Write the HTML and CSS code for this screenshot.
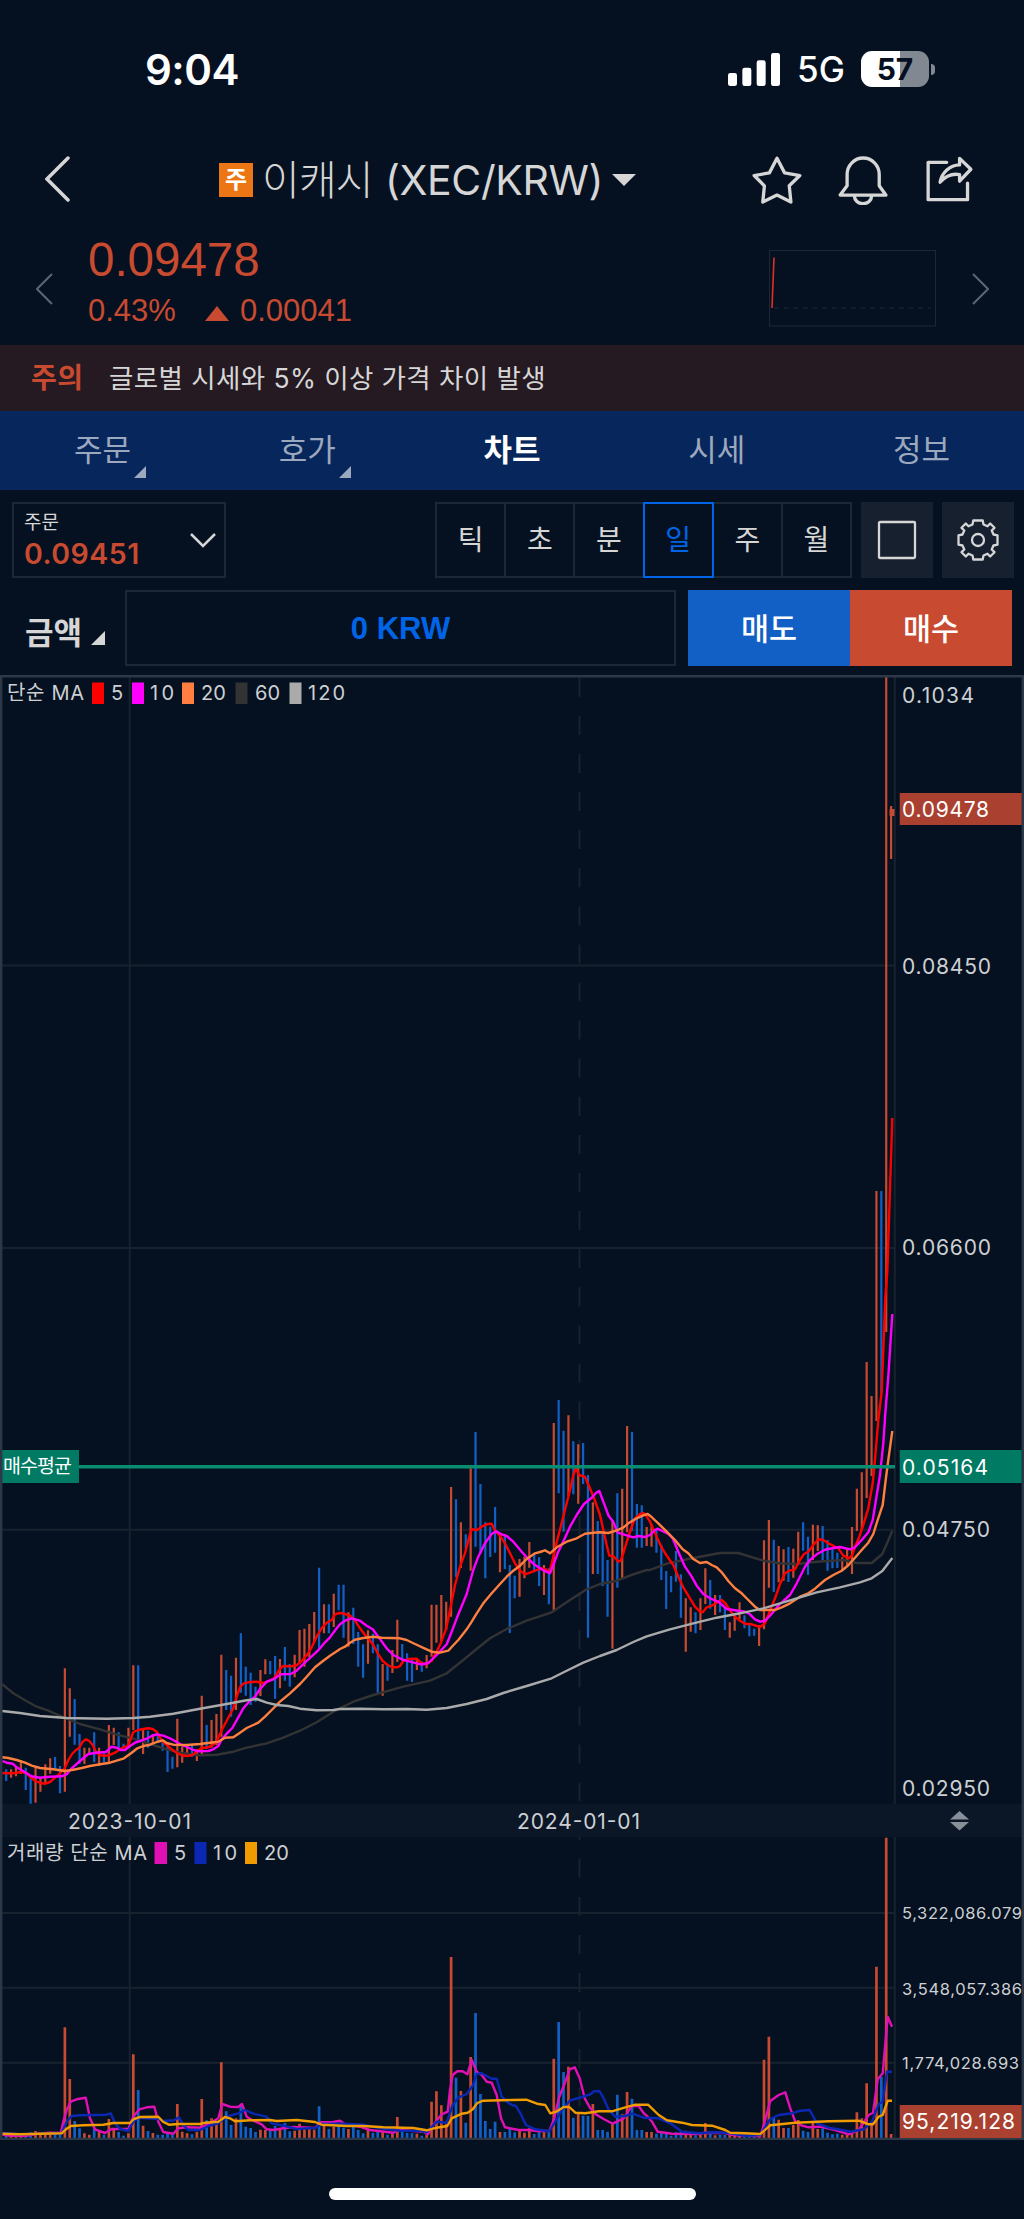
FILE: index.html
```html
<!DOCTYPE html>
<html lang="ko">
<head>
    <meta charset="UTF-8">
    <meta name="viewport" content="width=device-width, initial-scale=1.0">
    <title>이캐시 (XEC/KRW)</title>
    <link rel="stylesheet" href="styles.css">
</head>
<body>
    <div class="status-bar">
        <div class="clock">9:04</div>
        <div class="status-right">
            <svg class="signal" viewBox="0 0 156 99">
                <rect x="0" y="60" width="27" height="39" rx="7"/>
                <rect x="43" y="44" width="27" height="55" rx="7"/>
                <rect x="86" y="22" width="27" height="77" rx="7"/>
                <rect x="129" y="0" width="27" height="99" rx="7"/>
            </svg>
            <span class="network">5G</span>
            <div class="battery"><span>57</span></div>
            <div class="battery-nub"></div>
        </div>
    </div>

    <header class="top-bar">
        <svg class="back" viewBox="0 0 26 46"><path d="M23 2 L2 23 L23 44"/></svg>
        <div class="pair">
            <span class="badge">주</span>
            <h1><span class="pair-name">이캐시</span><span class="pair-code">(XEC/KRW)</span></h1>
            <i class="caret"></i>
        </div>
        <div class="actions">
            <svg class="icon" viewBox="154 376 150 148"><path d="M229 383 L252 427 L298 435 L266 466 L271 515 L229 494 L186 515 L191 466 L160 435 L206 427 Z"/></svg>
            <svg class="icon" viewBox="411 376 150 148"><path d="M438 466 V432 A48.5 50 0 0 1 535 432 V466 L555 494 H417 L438 466 Z"/><path d="M460 497 A26 23 0 0 0 512 497"/></svg>
            <svg class="icon" viewBox="668 376 150 148"><path d="M736 395 H680 V508 H799 V458"/><path d="M775 383 L809 416 L775 452 V432 C752 428 732 437 716 455 C722 425 745 404 775 403 Z"/></svg>
        </div>
    </header>

    <section class="quote">
        <svg class="arrow" viewBox="0 0 17 32"><path d="M16 1 L1 16 L16 31"/></svg>
        <div class="quote-price">
            <div class="price">0.09478</div>
            <div class="change"><span>0.43%</span><i class="up"></i><span>0.00041</span></div>
        </div>
        <svg class="mini-chart" viewBox="0 0 167 77">
            <rect x="0.5" y="0.5" width="166" height="75.5"/>
            <path class="mini-base" d="M5 58 H162"/>
            <path class="mini-line" d="M3 58 L5 7.500"/>
        </svg>
        <svg class="arrow" viewBox="0 0 17 32"><path d="M1 1 L16 16 L1 31"/></svg>
    </section>

    <div class="notice">
        <strong>주의</strong>
        <span>글로벌 시세와 5% 이상 가격 차이 발생</span>
    </div>

    <nav class="tabs">
        <a class="tab more">주문</a>
        <a class="tab more">호가</a>
        <a class="tab active">차트</a>
        <a class="tab">시세</a>
        <a class="tab">정보</a>
    </nav>

    <div class="toolbar">
        <div class="order-select">
            <div>
                <div class="order-label">주문</div>
                <div class="order-price">0.09451</div>
            </div>
            <svg viewBox="0 0 26 15"><path d="M1 1 L13 13 L25 1"/></svg>
        </div>
        <div class="periods">
            <div class="period">틱</div>
            <div class="period">초</div>
            <div class="period">분</div>
            <div class="period active">일</div>
            <div class="period">주</div>
            <div class="period">월</div>
        </div>
        <button class="tool"><svg viewBox="0 0 42 42"><rect x="3" y="3" width="36" height="36" rx="1"/></svg></button>
        <button class="tool"><svg viewBox="-21 -21 42 42"><circle r="6"/><path d="M-4.700 -19.500 H4.700 L5.500 -15.500 L9.500 -13.700 L12.200 -16.500 L16.500 -12.200 L13.700 -9.500 L15.500 -5.500 L19.500 -4.700 V4.700 L15.500 5.500 L13.700 9.500 L16.500 12.200 L12.200 16.500 L9.500 13.700 L5.500 15.500 L4.700 19.500 H-4.700 L-5.500 15.500 L-9.500 13.700 L-12.200 16.500 L-16.500 12.200 L-13.700 9.500 L-15.500 5.500 L-19.500 4.700 V-4.700 L-15.500 -5.500 L-13.700 -9.500 L-16.500 -12.200 L-12.200 -16.500 L-9.500 -13.700 L-5.500 -15.500 Z"/></svg></button>
    </div>

    <div class="order-row">
        <div class="amount-label">금액<i></i></div>
        <div class="amount">0 KRW</div>
        <button class="sell">매도</button>
        <button class="buy">매수</button>
    </div>

    <svg class="chart" viewBox="0 675 1024 1465">
        <g class="grid">
            <path d="M2 965.500 H894 M2 1248 H894 M2 1529.800 H894"/>
            <path d="M2 1913 H894 M2 1987.700 H894 M2 2062.800 H894"/>
            <path d="M129.700 677 V2138 M894.800 677 V2138"/>
            <path class="dashed" d="M579.500 677.700 V2138"/>
        </g>
        <rect class="date-band" x="2" y="1804" width="1020" height="33"/>

        <g id="price"></g>
        <g id="volume"></g>

        <rect class="avg" x="2" y="1465" width="893" height="3.500"/>
        <rect class="avg-box" x="2" y="1450" width="77" height="33"/>
        <text class="strong avg-label" x="3" y="1473" textLength="69">매수평균</text>

        <path class="frame" d="M1.200 2139 V676.200 H1022.800 V2139 Z"/>

        <g class="legend">
            <text x="7" y="699.500" textLength="77">단순 MA</text>
            <rect x="92" y="682.500" width="12" height="21.500" fill="#ff0000"/><text x="111" y="700">5</text>
            <rect x="132" y="682.500" width="12" height="21.500" fill="#ff00ff"/><text x="150" y="700" textLength="24">10</text>
            <rect x="182" y="682.500" width="12" height="21.500" fill="#ff7f40"/><text x="201" y="700">20</text>
            <rect x="235.500" y="682.500" width="12" height="21.500" fill="#333333"/><text x="255" y="700">60</text>
            <rect x="289.500" y="682.500" width="12" height="21.500" fill="#aaaaaa"/><text x="308" y="700" textLength="37">120</text>
        </g>
        <g class="legend">
            <text x="7" y="1860" textLength="140">거래량 단순 MA</text>
            <rect x="154.500" y="1842" width="12.500" height="22" fill="#e010b4"/><text x="174" y="1860">5</text>
            <rect x="194.500" y="1842" width="12" height="22" fill="#0a28b4"/><text x="213" y="1860" textLength="24">10</text>
            <rect x="245" y="1842" width="12" height="22" fill="#f09c00"/><text x="264" y="1860">20</text>
        </g>

        <g class="axis">
            <text x="902" y="702.500" textLength="72">0.1034</text>
            <text x="902" y="973.500" textLength="89">0.08450</text>
            <text x="902" y="1255" textLength="89">0.06600</text>
            <text x="902" y="1537.300" textLength="88">0.04750</text>
            <text x="902" y="1795.700" textLength="88">0.02950</text>
            <text x="68" y="1828.500" textLength="123">2023-10-01</text>
            <text x="517" y="1828.500" textLength="123">2024-01-01</text>
            <g class="small">
                <text x="902" y="1919" textLength="120">5,322,086.079</text>
                <text x="902" y="1994.500" textLength="120">3,548,057.386</text>
                <text x="902" y="2069" textLength="117">1,774,028.693</text>
            </g>
            <path class="sort" d="M950 1819.500 L959.500 1811 L969 1819.500 Z M950 1822 H969 L959.500 1830.500 Z"/>
        </g>

        <rect class="now-box" x="899.700" y="793" width="122" height="32"/>
        <text class="strong" x="902" y="816.500" textLength="87">0.09478</text>
        <rect class="avg-box" x="899.700" y="1450" width="122" height="33"/>
        <text class="strong" x="902" y="1474.700" textLength="86">0.05164</text>
        <rect class="now-box" x="899.700" y="2105" width="122" height="33"/>
        <text class="strong" x="902" y="2129.300" textLength="113">95,219.128</text>
    </svg>

    <div class="home-bar"></div>

    <script src="chart.js"></script>
</body>
</html>
```
FILE: styles.css
```css
:root {
    --bg: #051120;
    --line: #1d2836;
    --text: #d6d6d6;
    --red: #c84a30;
    --blue: #0064e6;
}

* {
    margin: 0;
    padding: 0;
    box-sizing: border-box;
}

body {
    width: 1024px;
    height: 2219px;
    background: var(--bg);
    color: var(--text);
    font-family: Inter, 'Noto Sans CJK KR', sans-serif;
    overflow: hidden;
}

svg {
    display: block;
    flex: none;
}

button {
    border: 0;
    color: #fff;
    font: inherit;
}

/* status bar */
.status-bar {
    display: flex;
    justify-content: space-between;
    align-items: center;
    height: 138px;
    padding: 0 89px 0 145px;
    color: #fff;
}

.clock {
    font-size: 42px;
    font-weight: 600;
    letter-spacing: -0.5px;
}

.status-right {
    display: flex;
    align-items: center;
}

.signal {
    width: 52px;
    height: 33px;
    fill: #fff;
}

.network {
    margin-left: 17px;
    width: 64px;
    font-size: 35px;
    font-weight: 500;
}

.battery {
    width: 68px;
    height: 36px;
    border-radius: 11px;
    background: linear-gradient(90deg, #fff 57%, #828891 57%);
    color: var(--bg);
    font-size: 30px;
    font-weight: 700;
    line-height: 36px;
    text-align: center;
}

.battery-nub {
    margin-left: 2px;
    width: 4px;
    height: 11px;
    border-radius: 0 5px 5px 0;
    background: #828891;
}

/* title */
.top-bar {
    display: flex;
    align-items: center;
    height: 84px;
    padding: 0 50px 0 45px;
    margin-bottom: 18px;
}

.back {
    width: 26px;
    height: 46px;
    margin-top: -3px;
    fill: none;
    stroke: var(--text);
    stroke-width: 3.5;
    stroke-linecap: round;
}

.pair {
    display: flex;
    align-items: center;
    margin-left: 148px;
}

.badge {
    width: 34px;
    height: 34px;
    background: #ec7614;
    color: #fff;
    font-size: 24px;
    font-weight: 700;
    line-height: 33px;
    text-align: center;
}

.pair h1 {
    display: flex;
    align-items: baseline;
    margin-left: 9px;
    font-size: 41px;
    font-weight: 400;
    line-height: 60px;
    white-space: nowrap;
}

.pair-name {
    width: 123px;
    font-weight: 300;
    letter-spacing: -0.8px;
}

.pair-code {
    width: 219px;
    letter-spacing: -0.4px;
}

.caret {
    border: 12px solid transparent;
    border-top-color: var(--text);
    border-bottom: 0;
    margin-left: 8px;
}

.actions {
    display: flex;
    gap: 36px;
    margin-left: auto;
}

.icon {
    width: 50px;
    height: 49px;
    fill: none;
    stroke: var(--text);
    stroke-width: 10;
    stroke-linejoin: round;
    stroke-linecap: round;
}

/* quote */
.quote {
    display: flex;
    align-items: center;
    height: 105px;
    padding: 0 35px 0 36px;
}

.arrow {
    width: 17px;
    height: 32px;
    margin-top: -8px;
    fill: none;
    stroke: #5d6571;
    stroke-width: 2;
}

.quote-price {
    flex: 1;
    margin-left: 35px;
    margin-top: -20px;
    color: var(--red);
    font-family: 'Liberation Sans', Arial, sans-serif;
}

.price {
    font-size: 47.5px;
    line-height: 53px;
}

.change {
    display: flex;
    align-items: baseline;
    margin-top: 3px;
    font-size: 31px;
    line-height: 43px;
}

.up {
    border: 12px solid transparent;
    border-bottom: 15px solid var(--red);
    border-top: 0;
    margin: 0 11px 0 29px;
}

.mini-chart {
    width: 167px;
    height: 77px;
    margin: -8px 36px 0 0;
    fill: none;
    stroke: var(--line);
}

.mini-base {
    stroke-dasharray: 5 4.600;
}

.mini-line {
    stroke: #e03028;
    stroke-width: 1.6;
}

/* notice */
.notice {
    display: flex;
    align-items: center;
    height: 66px;
    padding: 0 31px 4px;
    background: #251a22;
    font-size: 26.5px;
    letter-spacing: 0.4px;
}

.notice strong {
    width: 78px;
    color: var(--red);
    font-size: 28px;
    font-weight: 700;
}

/* tabs */
.tabs {
    display: flex;
    height: 79px;
    background: #07265c;
}

.tab {
    position: relative;
    flex: 1;
    color: #9ba8be;
    font-size: 31px;
    line-height: 77px;
    text-align: center;
}

.tab.active {
    color: #fff;
    font-weight: 700;
}

.tab.more::after {
    content: '';
    position: absolute;
    right: 59px;
    bottom: 12px;
    border-left: 12px solid transparent;
    border-bottom: 12px solid #9ba8be;
}

/* chart toolbar */
.toolbar {
    display: flex;
    height: 76px;
    margin: 12px 10px 12px 12px;
}

.order-select {
    display: flex;
    align-items: center;
    justify-content: space-between;
    width: 214px;
    padding: 0 8px 0 10px;
    border: 2px solid var(--line);
}

.order-label {
    font-size: 19px;
    line-height: 28px;
}

.order-price {
    color: var(--red);
    font-size: 28.5px;
    font-weight: 600;
    line-height: 34px;
    letter-spacing: 0.5px;
}

.order-select svg {
    width: 26px;
    height: 15px;
    fill: none;
    stroke: var(--text);
    stroke-width: 2.5;
}

.periods {
    display: flex;
    width: 417px;
    margin-left: auto;
}

.period {
    flex: 1;
    margin-right: -2px;
    border: 2px solid var(--line);
    font-size: 28px;
    line-height: 72px;
    text-align: center;
}

.period:last-child {
    margin-right: 0;
}

.period.active {
    z-index: 1;
    border-color: var(--blue);
    color: var(--blue);
}

.tool {
    display: flex;
    align-items: center;
    justify-content: center;
    width: 72px;
    margin-left: 9px;
    background: #16202e;
}

.tool svg {
    width: 42px;
    height: 42px;
    fill: none;
    stroke: var(--text);
    stroke-width: 2.3;
    stroke-linejoin: round;
}

/* order row */
.order-row {
    display: flex;
    height: 76px;
    margin: 0 12px 9px 0;
}

.amount-label {
    display: flex;
    align-items: center;
    width: 125px;
    padding-left: 25px;
    padding-top: 5px;
    font-size: 31px;
    font-weight: 700;
}

.amount-label i {
    border-left: 14px solid transparent;
    border-bottom: 14px solid var(--text);
    margin: 14px 0 0 9px;
}

.amount {
    flex: 1;
    margin-right: 12px;
    border: 2px solid var(--line);
    color: var(--blue);
    font: bold 31px/74px 'Liberation Sans', Arial, sans-serif;
    text-align: center;
}

.sell,
.buy {
    width: 162px;
    padding-bottom: 3px;
    background: #1260c6;
    font-size: 30.5px;
    font-weight: 500;
}

.buy {
    background: var(--red);
}

/* chart */
.chart {
    width: 1024px;
    height: 1465px;
    fill: none;
    font-size: 21px;
}

.grid {
    stroke: #18222f;
    stroke-width: 2;
}

.dashed {
    stroke-dasharray: 19 19.100;
}

.date-band {
    fill: #0b1727;
}

.frame {
    stroke: #2c3748;
    stroke-width: 2.4;
}

.chart text {
    fill: #cdd0d3;
}

.chart .legend text {
    font-size: 20px;
}

.chart .strong {
    fill: #fff;
}

.chart .avg-label {
    font-size: 19.5px;
}

.small {
    font-size: 16.5px;
}

.sort {
    fill: #888f99;
}

.avg {
    fill: #078e70;
}

.avg-box {
    fill: #007a63;
}

.now-box {
    fill: #aa4130;
}

.up-bar {
    stroke: #c84a30;
    stroke-width: 2.2;
}

.down-bar {
    stroke: #1260c6;
    stroke-width: 2.2;
}

.vol-bars .up-bar,
.vol-bars .down-bar {
    stroke-width: 2.7;
}

.ma {
    stroke-width: 2.4;
    stroke-linejoin: round;
}

.home-bar {
    width: 367px;
    height: 12px;
    margin: 48px auto 0;
    border-radius: 6px;
    background: #fff;
}
```
FILE: chart.js
```js
const SVG = 'http://www.w3.org/2000/svg';
const STEP = 4.889;
const FIRST_X = 6.2;
const UNIT = 3; // data units per pixel

// r = up day, b = down day, then high-low; base is the y the run is measured from
const candles = [
    { base: 1480, rows: 'b868-903 r868-893 r857-889 r840-881 b863-930 b895-971 r863-968 r890-935 r853-912 r835-881 b831-866 b858-940 r565-935 r625-770 b657-794 b762-851 r803-852 r803-825 b757-847 r803-858 b820-847 r735-850 r743-795 b757-808 b791-803 r743-797 r556-750 b556-782 r747-822 b752-803 r762-797 b765-786 b780-812 b790-876 b830-866 r716-862 r800-848 r795-830 b795-830 r808-843 r647-822 b735-807 r720-803 r702-795 r524-770 b570-690 b587-710 r533-690 b460-638 b560-647 b578-675 b620-665 r570-648 r538-583 b543-583 b528-656 r537-625 b501-602 b552-620 r524-592 r450-552 r446-560 r432-532 r396-487 b263-510 r373-460 b373-460 r341-441 b314-391 b314-473' },
    { base: 1380, rows: 'r697-800 b683-792 b756-860 b793-893 r751-851 b761-820 b793-938 r852-947 b855-902 r810-879 r719-846 b792-843 b820-902 b838-906 r834-870 b844-875 r825-865 r674-830 r674-788 r645-783 r665-750 r321-710 b358-592 r427-564 b463-508 r265-572 b156-500 b312-522 b427-595 b440-531 b381-518 r468-577 b468-567 b555-759 b587-655 r537-650 r530-595 r486-563 b523-577 b532-618 r555-645 b565-673 r129-690 b60-340 b152-455 r106-348 b184-343 r193-371 b189-312 b285-773 r367-582 b423-582 b455-618 b540-710 r423-806 b340-623 r326-597 r138-457 b156-453 b372-503 b376-503 r441-498 r432-500 b450-518 b495-600 b573-687 b588-637 b513-605 b583-713 r655-815 r682-755 b697-760 r655-750 r565-672 b600-686 r645-705 b645-697 b683-750 r727-773 r708-752 r667-718 b706-745 b729-769 b746-767 r735-798 r481-748 r420-623 b479-636 r498-607 r508-602 b501-606 r506-593 r455-550 b427-512 b470-584 r434-540 r436-513 b438-540 b480-572 b507-565 b518-564 r532-570 r507-555 r441-582 r326-453 r277-450' },
    { base: 677, rows: 'r2055-2463 r2157-2397 r1542-2232 b1542-2148 r0-1965 r387-546' }
];

const VOL_BASE = 1800;
const VOL_FLOOR = 1014;
const volumes = '1007 1006 1005 1005 1005 997 993 1003 1004 1000 1002 1001 682 837 963 985 1000 1004 985 992 1004 957 985 996 1007 1000 763 870 977 993 999 1004 1004 1000 1004 912 995 1000 1003 995 897 961 955 965 787 934 975 955 915 980 984 996 989 990 988 978 985 969 994 992 971 982 987 989 919 975 987 980 976 983 987 980 990 1000 987 998 996 996 1004 1000 951 995 999 1000 1001 1007 1004 905 874 916 972 471 833 873 968 771 639 882 963 987 965 996 996 983 997 992 998 985 1002 993 997 995 776 666 816 800 953 940 947 948 912 990 990 995 972 884 943 876 896 990 990 996 996 1001 998 1000 1007 997 996 992 1003 1006 1003 969 1000 1006 1004 1004 1005 1005 1005 1009 1008 1009 1008 779 710 953 959 984 984 975 960 992 996 965 987 985 998 1003 1001 1004 1003 1000 937 955 850 965 500 830 113 1002'.split(' ').map(Number);

// every line is three (or two) runs, each with its own origin
const PRICE_RUNS = [[0, 1480], [340, 1380], [650, 1380]];
const VOL_RUNS = [[0, 1800], [512, 1800]];

const priceLines = [
    { color: '#333333', runs: [
        '7,613 40,640 80,664 110,680 145,692 185,710 240,732 300,748 350,764 400,776 450,792 500,808 550,820 600,826 650,824 700,815 740,803 800,790 850,773 900,752 950,727 1000,695',
        '0,985 40,965 100,945 190,920 270,902 320,880 370,840 410,807 450,775 500,747 560,722 635,697 690,660 740,628 780,612 830,602 880,583 920,570',
        '0,570 50,551 100,540 150,530 210,519 265,519 300,530 340,542 390,550 440,552 500,545 580,540 620,549 665,549 697,522 712,488 727,452'] },
    { color: '#ff0000', runs: [
        '7,879 25,880 45,879 62,876 77,878 92,892 106,903 121,909 136,911 150,906 165,893 180,880 194,865 204,842 216,822 228,810 238,803 248,785 258,778 268,783 278,795 288,815 297,825 312,827 326,826 345,818 370,802 385,796 400,756 415,750 430,747 445,745 458,747 470,755 485,782 500,795 515,808 530,818 545,826 560,828 576,826 590,815 605,803 620,803 634,798 649,787 664,753 680,722 700,685 710,650 720,622 730,611 745,607 770,605 790,609 805,604 822,595 840,566 850,558 875,559 890,556 905,543 920,526 935,502 950,470 965,444 980,428 995,420 1005,403 1018,399',
        '8,700 20,704 32,708 45,722 60,745 75,765 85,775 100,795 113,820 128,843 143,855 157,862 172,862 180,858 190,843 205,837 230,836 245,850 260,852 275,842 290,815 304,785 319,745 330,690 345,615 360,560 375,520 390,462 395,448 412,450 425,440 440,433 455,431 465,452 480,467 495,490 510,520 525,550 540,572 555,583 570,578 590,570 605,565 618,568 628,578 640,530 650,487 662,440 675,390 690,330 700,285 707,265 718,285 735,291 748,320 765,362 780,405 792,458 800,495 808,527 822,530 835,545 842,542 850,520 862,480 875,440 885,415 900,402 912,400 922,412',
        '0,425 20,470 35,503 50,527 70,555 85,590 100,622 120,655 135,680 150,695 158,697 170,682 185,677 200,668 215,660 228,672 240,692 255,710 270,722 285,731 305,733 330,741 345,730 360,692 375,655 390,612 405,580 418,572 435,568 450,540 462,522 475,515 490,495 505,478 520,480 535,490 550,497 565,505 580,527 597,535 607,525 615,500 628,470 640,435 655,385 668,310 675,240 685,120 695,35 706,-247 712,-324 727,-786'] },
    { color: '#ff00ff', runs: [
        '7,843 20,848 38,851 50,862 65,871 80,880 95,889 120,893 150,890 185,889 200,883 215,865 240,843 265,822 290,818 318,816 335,800 350,803 362,810 375,810 390,798 405,788 420,783 440,776 455,768 470,763 490,767 510,775 530,786 545,795 560,800 575,808 595,814 625,813 640,808 655,798 665,778 680,761 697,744 715,712 730,685 750,662 765,650 780,627 800,605 820,598 843,583 872,582 890,572 905,557 920,543 945,520 960,505 975,487 990,472 1010,445',
        '0,733 15,722 35,715 60,722 80,737 98,748 115,770 140,805 160,825 185,838 210,845 245,854 265,849 290,825 320,793 335,755 350,715 380,642 400,570 415,530 435,490 455,462 468,454 485,463 500,468 520,485 545,515 565,537 585,555 605,568 630,580 640,555 655,515 672,480 690,440 710,405 732,372 755,353 770,337 778,333 790,365 806,408 820,425 833,458 860,466 880,472 895,468 915,471',
        '0,465 15,450 22,446 35,452 55,462 68,475 85,515 105,560 125,590 140,617 160,642 180,655 205,665 230,687 255,691 285,695 300,703 315,718 330,725 345,722 362,705 385,677 400,663 420,645 440,610 465,560 480,540 500,523 525,509 550,504 570,501 600,508 615,502 635,480 655,457 668,420 677,365 690,285 700,190 706,100 715,-10 727,-198'] },
    { color: '#ff7f40', runs: [
        '7,832 25,834 50,840 75,848 95,857 120,864 160,868 195,873 220,869 245,864 270,858 300,853 330,848 370,836 395,818 410,806 430,798 450,794 470,786 488,781 500,789 520,794 560,795 600,792 630,788 655,785 675,773 700,772 720,758 740,744 775,728 795,710 815,690 840,665 870,640 900,612 920,590 945,562 970,542 990,527 1015,511',
        '0,807 15,800 30,788 45,779 70,774 100,770 125,773 180,775 200,780 225,792 255,806 275,815 300,818 325,812 340,796 355,780 380,748 395,725 410,700 430,670 455,640 480,612 500,590 520,572 540,557 560,537 585,520 600,516 615,511 630,520 650,502 680,485 710,475 735,461 760,458 780,457 805,459 830,451 850,443 865,430 890,415 910,406 923,402',
        '0,407 25,430 50,455 75,480 98,508 115,520 130,537 150,549 170,546 185,555 200,562 215,577 235,603 255,625 275,640 295,660 315,680 330,690 375,690 395,682 420,670 450,650 475,640 495,626 525,600 550,585 575,572 595,556 615,533 635,510 655,488 670,462 683,420 698,375 707,300 715,240 727,153'] },
    { color: '#aaaaaa', runs: [
        '7,693 60,699 120,708 200,714 320,716 400,714 450,710 520,701 600,686 680,672 740,661 770,657 800,668 830,675 865,678 900,686 950,691 1000,690',
        '0,987 60,986 130,988 200,987 260,989 320,984 380,972 440,957 490,939 560,918 635,895 680,872 730,848 780,828 830,810 880,786 920,769',
        '0,766 60,748 130,730 200,713 270,700 340,685 390,670 450,652 500,637 570,622 630,607 665,595 697,573 727,534'] }
];

const volumeLines = [
    { color: '#e010b4', runs: [
        '7,1004 30,1007 80,1007 110,1001 150,998 182,999 190,965 200,930 212,905 230,898 257,893 270,955 285,988 315,999 335,987 385,987 400,950 418,928 440,922 463,920 475,965 490,996 520,1001 535,985 560,982 600,983 630,970 655,955 667,912 690,920 715,921 726,912 740,950 760,962 785,973 800,988 820,990 850,985 880,981 945,984 962,967 1000,966 1020,962 1035,973 1080,980 1110,990 1180,998 1200,990 1270,995 1283,1003 1300,975 1325,943 1343,935 1350,870 1358,825 1372,814 1388,814 1402,823 1415,780 1430,815 1445,825 1460,845 1475,848 1490,885 1503,955 1515,982',
        '0,986 20,990 50,990 75,993 112,993 125,960 142,890 160,845 173,808 188,802 203,835 218,895 235,925 250,942 275,957 302,971 335,955 360,917 380,918 395,940 405,948 420,965 437,995 480,1001 560,1002 580,998 640,999 665,1006 745,1008 757,970 775,903 800,885 820,877 835,925 850,965 870,977 890,982 925,980 970,990 1010,1003 1040,990 1070,945 1083,938 1097,838 1112,820 1127,650 1140,680'] },
    { color: '#0a28b4', runs: [
        '7,999 60,1003 185,1000 200,965 215,948 240,946 290,945 318,944 332,940 345,970 360,987 385,993 400,965 415,953 475,957 490,963 522,961 537,952 550,975 565,990 600,990 625,978 655,970 668,958 690,947 715,940 735,930 760,941 800,950 815,970 850,977 890,987 945,984 965,972 1030,971 1090,974 1130,983 1200,992 1260,993 1280,997 1310,965 1340,968 1358,915 1375,893 1400,882 1418,857 1430,822 1445,820 1475,836 1490,836 1505,890 1520,905',
        '0,915 12,918 25,940 42,975 70,988 112,994 130,965 150,930 173,902 200,894 235,883 247,874 263,874 275,895 290,930 310,950 340,948 362,941 395,953 440,955 475,970 510,995 560,1000 600,997 650,999 700,1007 745,1005 775,957 800,945 840,940 865,932 893,930 915,970 950,983 985,989 1015,995 1055,988 1080,965 1100,912 1112,905 1125,815 1140,815'] },
    { color: '#f09c00', runs: [
        '7,1001 60,1003 185,1000 195,990 212,978 250,976 310,974 340,969 390,969 402,957 420,951 475,950 490,966 507,974 535,972 600,972 615,968 655,965 675,951 690,955 705,964 750,961 810,960 830,963 890,960 945,966 965,974 1040,978 1090,978 1150,982 1240,984 1280,991 1310,983 1342,978 1355,955 1385,941 1403,938 1418,928 1432,909 1450,902',
        '0,900 43,899 75,911 100,915 115,940 135,934 155,921 172,921 190,938 220,940 260,934 300,934 340,922 370,914 408,914 440,945 465,961 510,968 540,975 600,977 640,990 655,998 700,1000 745,1002 775,976 850,968 950,964 1040,962 1070,973 1083,973 1100,950 1112,945 1127,902 1140,902'] }
];

function add(parent, tag, attrs) {
    const el = document.createElementNS(SVG, tag);
    for (const key in attrs) el.setAttribute(key, attrs[key]);
    parent.appendChild(el);
    return el;
}

function drawBars(parent, bars) {
    const paths = { r: '', b: '' };
    bars.forEach((bar, i) => {
        const x = (FIRST_X + i * STEP).toFixed(2);
        paths[bar.dir] += `M${x} ${bar.top.toFixed(1)}V${bar.bottom.toFixed(1)}`;
    });
    add(parent, 'path', { class: 'up-bar', d: paths.r });
    add(parent, 'path', { class: 'down-bar', d: paths.b });
}

function drawLines(parent, lines, origins) {
    lines.forEach(line => {
        const points = line.runs.map((run, i) => run.split(' ').map(pair => {
            const [x, y] = pair.split(',').map(Number);
            return `${(origins[i][0] + x / UNIT).toFixed(1)},${(origins[i][1] + y / UNIT).toFixed(1)}`;
        }).join(' ')).join(' ');
        add(parent, 'polyline', { class: 'ma', stroke: line.color, points });
    });
}

const days = candles.flatMap(part => part.rows.split(' ').map(row => {
    const [high, low] = row.slice(1).split('-').map(Number);
    return { dir: row[0], top: part.base + high / UNIT, bottom: part.base + low / UNIT };
}));

const price = document.getElementById('price');
drawBars(price, days);
add(price, 'rect', { x: 889.5, y: 809, width: 5, height: 7, fill: '#c84a30' });
drawLines(price, priceLines, PRICE_RUNS);

const volume = document.getElementById('volume');
const bars = add(volume, 'g', { class: 'vol-bars' });
drawBars(bars, days.map((day, i) => ({
    dir: day.dir,
    top: VOL_BASE + volumes[i] / UNIT,
    bottom: VOL_BASE + VOL_FLOOR / UNIT
})));
drawLines(volume, volumeLines, VOL_RUNS);
```
